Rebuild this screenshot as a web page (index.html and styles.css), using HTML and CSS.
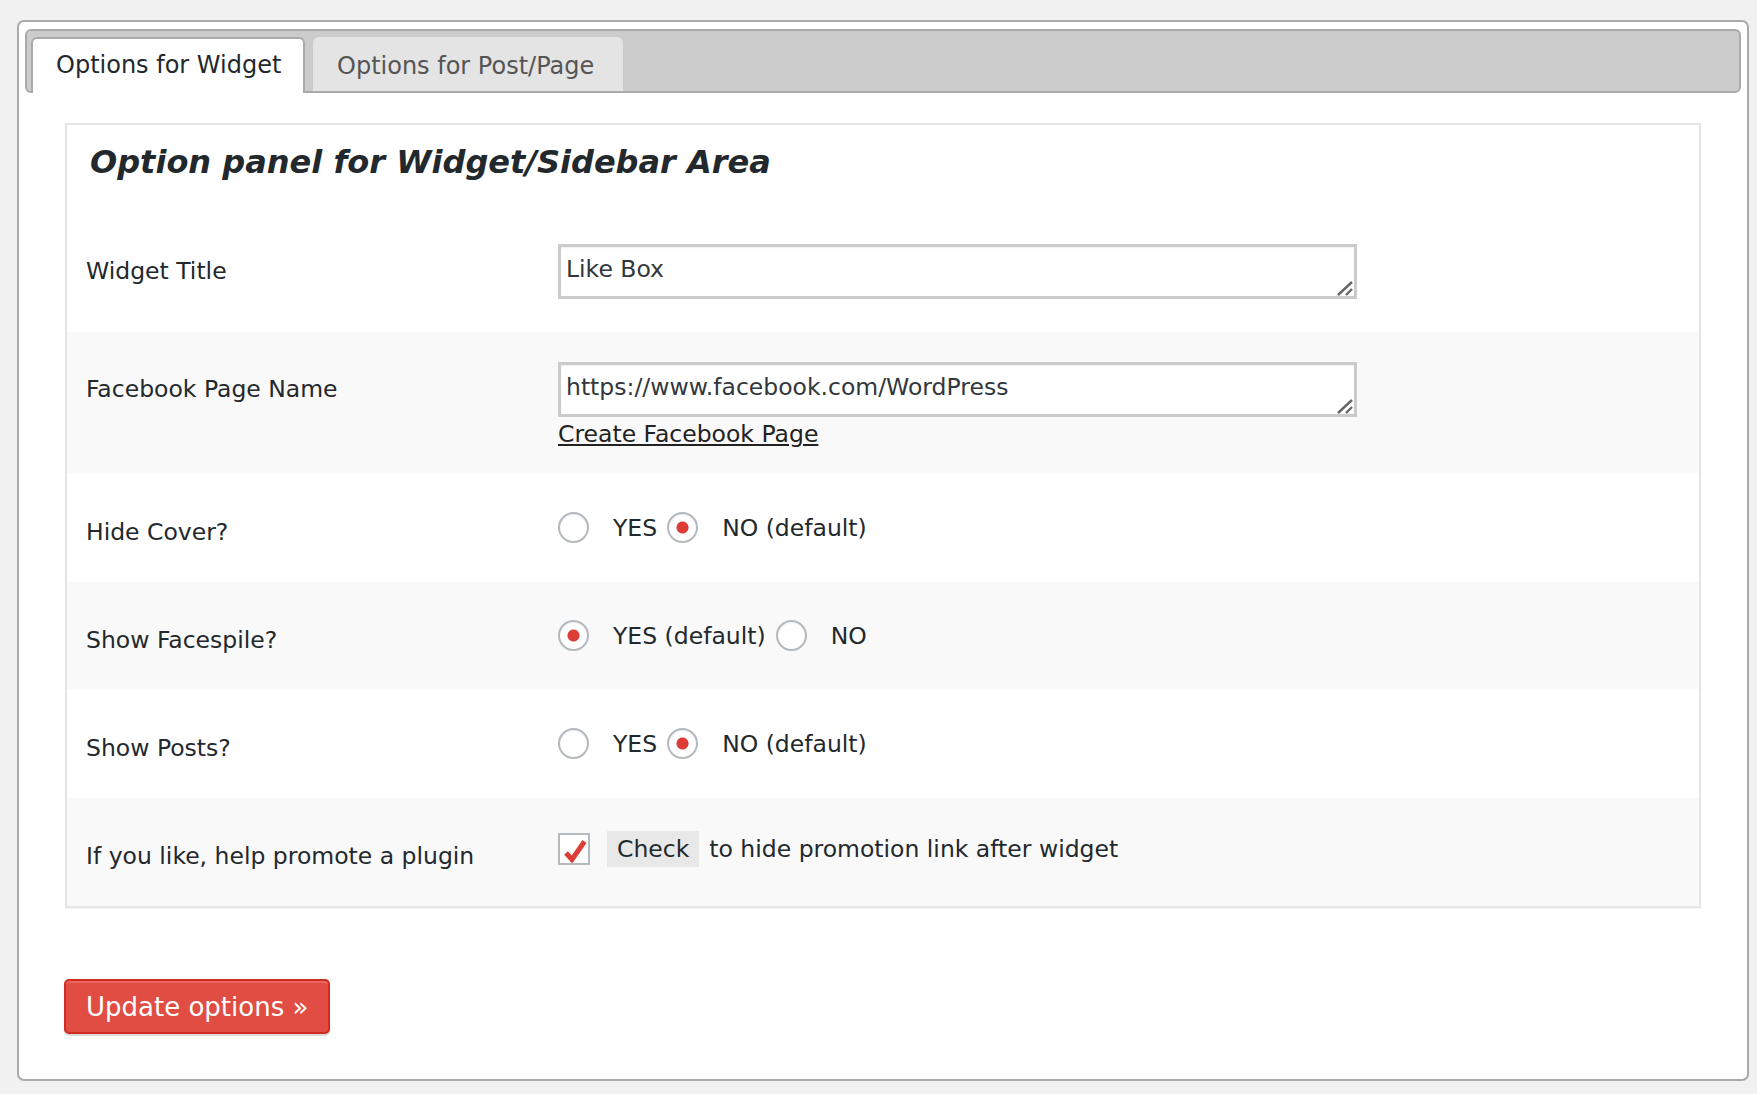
FILE: index.html
```html
<!DOCTYPE html>
<html lang="en">
<head>
<meta charset="utf-8">
<title>Options</title>
<link rel="stylesheet" href="styles.css">
</head>
<body>
<div class="wrap">
  <div class="tabbar">
    <div class="tab active">Options for Widget</div>
    <div class="tab">Options for Post/Page</div>
  </div>
  <div class="content">
    <div class="panel">
      <h2 class="title">Option panel for Widget/Sidebar Area</h2>

      <div class="row r1">
        <div class="label tall">Widget Title</div>
        <div class="field">
          <span class="inputwrap">
            <textarea class="input" rows="1">Like Box</textarea>
            <svg class="grip" width="18" height="16" viewBox="0 0 18 16"><line x1="2" y1="15" x2="16" y2="2" stroke="#666" stroke-width="2.4"/><line x1="10" y1="15" x2="16" y2="9" stroke="#666" stroke-width="2.4"/></svg>
          </span>
        </div>
      </div>

      <div class="row r2 alt">
        <div class="label tall">Facebook Page Name</div>
        <div class="field">
          <span class="inputwrap">
            <textarea class="input" rows="1">https://www.facebook.com/WordPress</textarea>
            <svg class="grip" width="18" height="16" viewBox="0 0 18 16"><line x1="2" y1="15" x2="16" y2="2" stroke="#666" stroke-width="2.4"/><line x1="10" y1="15" x2="16" y2="9" stroke="#666" stroke-width="2.4"/></svg>
          </span>
          <a class="link" href="#">Create Facebook Page</a>
        </div>
      </div>

      <div class="row r3 radiorow">
        <div class="label">Hide Cover?</div>
        <div class="choices">
          <span class="radio"></span><span class="opt">YES</span>
          <span class="radio checked"></span><span class="opt">NO (default)</span>
        </div>
      </div>

      <div class="row r4 radiorow alt">
        <div class="label">Show Facespile?</div>
        <div class="choices">
          <span class="radio checked"></span><span class="opt">YES (default)</span>
          <span class="radio"></span><span class="opt">NO</span>
        </div>
      </div>

      <div class="row r5 radiorow">
        <div class="label">Show Posts?</div>
        <div class="choices">
          <span class="radio"></span><span class="opt">YES</span>
          <span class="radio checked"></span><span class="opt">NO (default)</span>
        </div>
      </div>

      <div class="row r6 radiorow alt">
        <div class="label">If you like, help promote a plugin</div>
        <div class="choices">
          <span class="checkbox"><svg width="28" height="28" viewBox="0 0 28 28"><polyline points="6,18 12,24.5 24.5,6.5" fill="none" stroke="#dd3d36" stroke-width="5" stroke-linecap="butt" stroke-linejoin="miter"/></svg></span>
          <span class="code">Check</span>
          <span class="note">to hide promotion link after widget</span>
        </div>
      </div>
    </div>
    <button class="btn" type="button">Update options »</button>
  </div>
</div>
</body>
</html>
```

FILE: styles.css
```css
html, body {
  margin: 0;
  padding: 0;
}
body {
  background: #f1f1f1;
  font-family: "DejaVu Sans", Verdana, sans-serif;
  color: #23282d;
}
.wrap {
  box-sizing: border-box;
  margin: 20px 0 0 17px;
  width: 1732px;
  height: 1061px;
  background: #fff;
  border: 2px solid #aaa;
  border-radius: 7px;
  padding: 7px 6px 0 6px;
}
.tabbar {
  box-sizing: border-box;
  height: 64px;
  background: #ccc;
  border: 2px solid #aaa;
  border-radius: 6px;
  display: flex;
  align-items: flex-end;
  padding-left: 4px;
  gap: 8px;
}
.tab {
  box-sizing: border-box;
  height: 54px;
  border-radius: 6px 6px 0 0;
  font-size: 24px;
  line-height: 58px;
  color: #555;
  background: #e4e4e4;
  width: 310px;
  padding-left: 24px;
}
.tab.active {
  height: 56px;
  margin-bottom: -2px;
  width: 274px;
  background: #fff;
  color: #23282d;
  border: 2px solid #aaa;
  border-bottom: none;
  padding-left: 23px;
  line-height: 53px;
}
.content {
  padding: 30px 40px 0 40px;
}
.panel {
  background: #fff;
  border: 2px solid #e5e5e5;
  box-shadow: 0 1px 1px rgba(0,0,0,0.04);
}
.title {
  margin: 0;
  font-size: 32px;
  line-height: 40px;
  font-weight: bold;
  font-style: italic;
  padding: 17px 0 42px 23px;
  color: #23282d;
}
.row {
  display: grid;
  grid-template-columns: 472px 1fr;
  padding-left: 19px;
  font-size: 23.5px;
}
.row.alt {
  background: #f9f9f9;
}
.r1 {
  padding-top: 20px;
  padding-bottom: 33px;
}
.r2 {
  padding-top: 30px;
  padding-bottom: 25px;
}
.label {
  color: #23282d;
}
.label.tall {
  line-height: 55px;
}
.field {
  display: flex;
  flex-direction: column;
  align-items: flex-start;
}
.inputwrap {
  position: relative;
  display: block;
  width: 799px;
  height: 55px;
}
.input {
  box-sizing: border-box;
  display: block;
  width: 799px;
  height: 55px;
  margin: 0;
  border: 3px solid #cbcbcb;
  padding: 8px 5px 0 5px;
  font-family: "DejaVu Sans", Verdana, sans-serif;
  font-size: 23.5px;
  line-height: 28px;
  color: #32373c;
  background: #fff;
  box-shadow: inset 0 1px 2px rgba(0,0,0,0.07);
  overflow: hidden;
  resize: none;
  outline: none;
}
.grip {
  position: absolute;
  right: 3px;
  bottom: 3px;
  display: block;
}
.link {
  margin-top: 3px;
  line-height: 28px;
  color: #222;
  text-decoration: underline;
}
.radiorow {
  align-items: center;
}
.radiorow .label {
  margin-top: 8px;
}
.r3 { height: 109px; }
.r4 { height: 107px; }
.r5 { height: 109px; }
.r6 { height: 108px; }
.choices {
  display: flex;
  align-items: center;
}
.radio {
  box-sizing: border-box;
  width: 31px;
  height: 31px;
  border-radius: 50%;
  border: 2px solid #b4b9be;
  background: #fff;
  box-shadow: inset 0 1px 2px rgba(0,0,0,0.08);
  margin-right: 24px;
  flex: none;
}
.radio.checked {
  background: radial-gradient(circle, #dd3d36 0, #dd3d36 5.5px, #fff 6.5px);
}
.opt {
  margin-right: 10px;
  line-height: 28px;
}
.checkbox {
  box-sizing: border-box;
  width: 32px;
  height: 32px;
  border: 2px solid #b4b9be;
  background: #fff;
  display: flex;
  flex: none;
  margin-right: 17px;
  margin-top: -7px;
}
.checkbox svg {
  display: block;
}
.code {
  background: #e8e8e8;
  padding: 0 10px;
  line-height: 36px;
  height: 36px;
  color: #23282d;
  margin-right: 10px;
  margin-top: -6px;
}
.note {
  line-height: 28px;
  margin-top: -6px;
}
.btn {
  box-sizing: border-box;
  display: block;
  margin: 71px 0 0 -1px;
  height: 55px;
  padding: 0 20px;
  font-family: "DejaVu Sans", Verdana, sans-serif;
  font-size: 26px;
  color: #fff;
  background: #e14d43;
  border: 2px solid #d02c21;
  border-radius: 5px;
  box-shadow: inset 0 2px 0 rgba(255,255,255,0.15), 0 2px 1px rgba(0,0,0,0.15);
  cursor: pointer;
}
```
